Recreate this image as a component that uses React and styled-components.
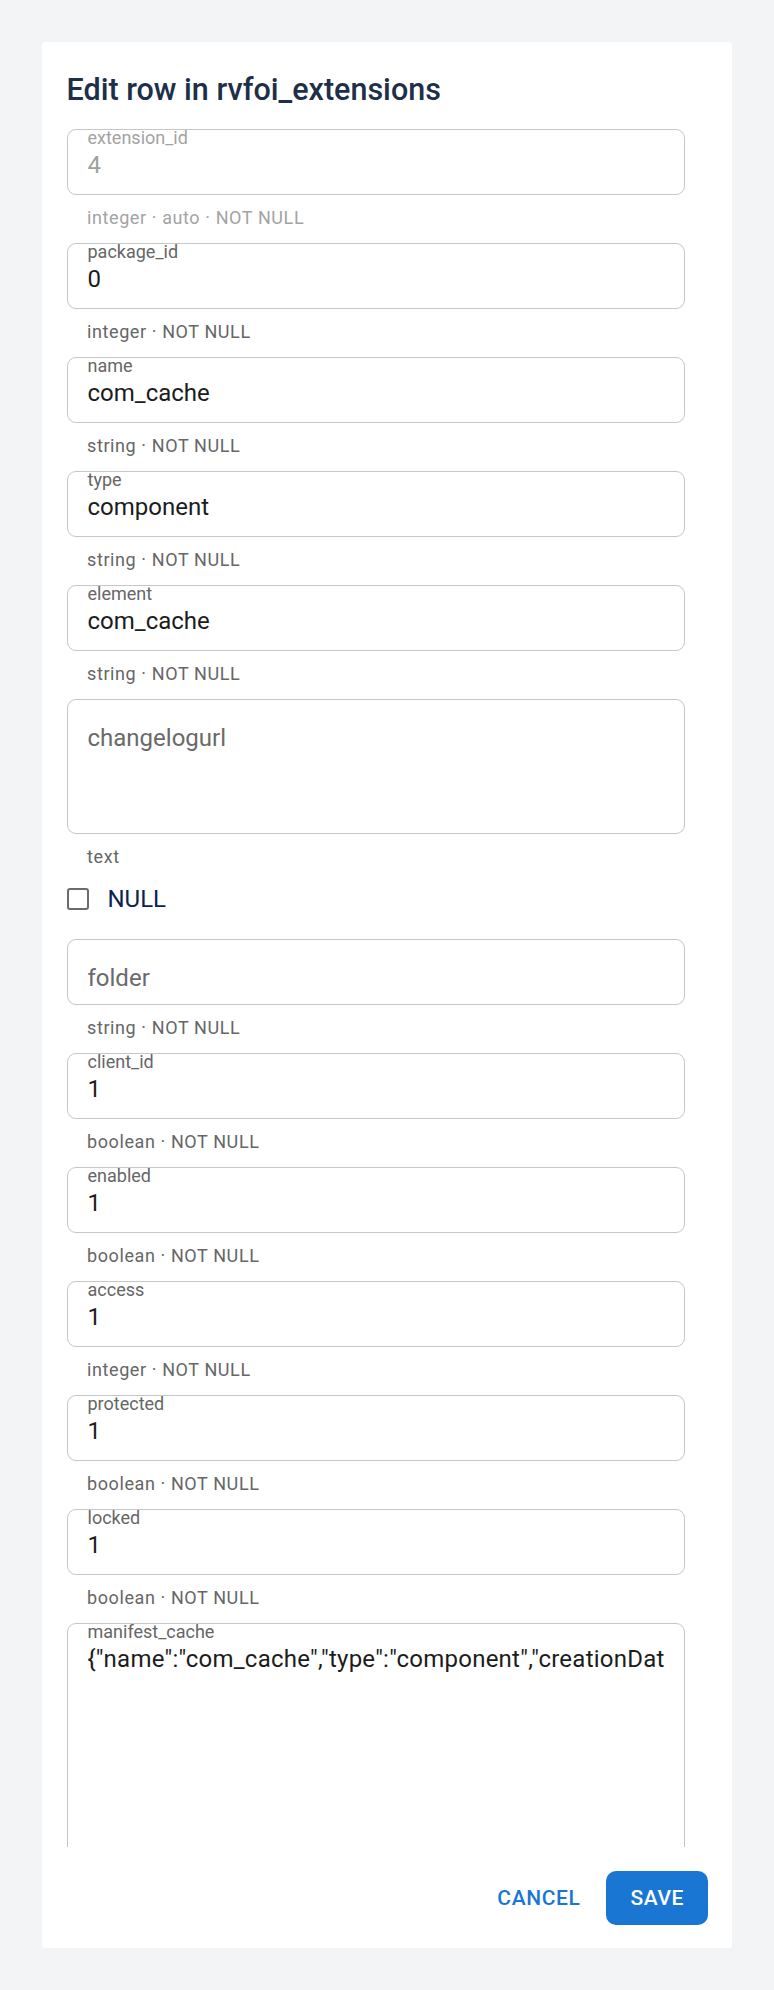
import React from "react"
import styled, { createGlobalStyle } from "styled-components"

const manifestValue =
    '{"name":"com_cache","type":"component","creationDate":"2006-04","author":"Joomla! Project","copyright":"(C) 2006 Open Source Matters, Inc.","version":"4.0.0"}'

const fields = [
    { name: "extension_id", value: "4", helper: "integer · auto · NOT NULL", disabled: true },
    { name: "package_id", value: "0", helper: "integer · NOT NULL" },
    { name: "name", value: "com_cache", helper: "string · NOT NULL" },
    { name: "type", value: "component", helper: "string · NOT NULL" },
    { name: "element", value: "com_cache", helper: "string · NOT NULL" },
    { name: "changelogurl", value: "", helper: "text", multiline: true, height: 135, nullable: true },
    { name: "folder", value: "", helper: "string · NOT NULL" },
    { name: "client_id", value: "1", helper: "boolean · NOT NULL" },
    { name: "enabled", value: "1", helper: "boolean · NOT NULL" },
    { name: "access", value: "1", helper: "integer · NOT NULL" },
    { name: "protected", value: "1", helper: "boolean · NOT NULL" },
    { name: "locked", value: "1", helper: "boolean · NOT NULL" },
    { name: "manifest_cache", value: manifestValue, helper: "text", multiline: true, height: 320 },
]

const Field = ({ name, value, helper, disabled, multiline, height, nullable }) => {     // filled fields show a small label on top, empty ones show it as a placeholder
    const filled = value !== ""
    return (
        <>
            <FieldWrap>
                <InputBox $height={multiline ? height : 66}>
                    {filled ? (
                        <>
                            <SmallLabel $disabled={disabled}>{name}</SmallLabel>
                            <Value $disabled={disabled} $multiline={multiline}>{value}</Value>
                        </>
                    ) : (
                        <Placeholder>{name}</Placeholder>
                    )}
                </InputBox>
                <Helper $disabled={disabled}>{helper}</Helper>
            </FieldWrap>
            {nullable && (
                <NullRow>
                    <CheckBox />
                    <NullLabel>NULL</NullLabel>
                </NullRow>
            )}
        </>
    )
}

const App = () => {
    return (
        <>
            <GlobalStyle />
            <Page>
                <Dialog>
                    <Title>Edit row in rvfoi_extensions</Title>
                    <Content>
                        {fields.map(f => <Field key={f.name} {...f} />)}
                    </Content>
                    <Actions>
                        <TextButton>Cancel</TextButton>
                        <SaveButton>Save</SaveButton>
                    </Actions>
                </Dialog>
            </Page>
        </>
    )
}

export default App


//-----------------------------------------------STYLES-----------------------------------------------//

const GlobalStyle = createGlobalStyle`
    body {
        margin: 0;
        background: #f3f4f6;
        font-family: Roboto, "Liberation Sans", sans-serif;
    }
`

const Page = styled.div`
    padding: 42px;
    height: 100vh;
    box-sizing: border-box;
`

const Dialog = styled.div`
    height: 100%;
    background: #ffffff;
    border-radius: 3px;
    display: flex;
    flex-direction: column;
    overflow: hidden;
`

const Title = styled.h2`
    margin: 0;
    padding: 24px 24px 0 24.5px;
    font-size: 30.5px;
    line-height: 48px;
    font-weight: 500;
    color: #1e2f4a;
`

const Content = styled.div`
    flex: 1;
    min-height: 0;
    overflow: hidden;
    padding: 15px 47px 0 24.5px;
`

const FieldWrap = styled.div`
    margin-bottom: 10px;
`

const InputBox = styled.div`
    height: ${props => props.$height}px;
    box-sizing: border-box;
    border: 1.5px solid #c6c6c6;
    border-radius: 9px;
    padding: 0 20px;
`

const SmallLabel = styled.div`
    margin-top: -1.5px;
    font-size: 18px;
    line-height: 18px;
    color: ${props => props.$disabled ? "#a3a3a3" : "#666666"};
`

const Value = styled.div`
    font-size: 24px;
    line-height: 36px;
    letter-spacing: ${props => props.$multiline ? "0.25px" : "0"};
    color: ${props => props.$disabled ? "#a0a0a0" : "#1c1c1c"};
    white-space: nowrap;
    overflow: hidden;
`

const Placeholder = styled.div`
    padding-top: 19.5px;
    font-size: 24px;
    line-height: 36px;
    color: #6a6a6a;
`

const Helper = styled.div`
    margin: 8px 0 0 20.5px;
    font-size: 18px;
    line-height: 30px;
    letter-spacing: 0.6px;
    color: ${props => props.$disabled ? "#a3a3a3" : "#666666"};
`

const NullRow = styled.label`
    height: 34px;
    margin-bottom: 23px;
    display: flex;
    align-items: center;
    gap: 19px;
`

const CheckBox = styled.span`
    width: 22px;
    height: 22px;
    box-sizing: border-box;
    border: 2.5px solid #6b6b6b;
    border-radius: 3px;
`

const NullLabel = styled.span`
    font-size: 24px;
    color: #0b2354;
`

const Actions = styled.div`
    display: flex;
    justify-content: flex-end;
    align-items: center;
    gap: 14px;
    padding: 24px 24px 23px;
`

const TextButton = styled.button`
    height: 54px;
    padding: 0 12px;
    border: none;
    background: none;
    font-family: inherit;
    font-size: 21px;
    font-weight: 500;
    letter-spacing: 0.6px;
    text-transform: uppercase;
    color: #1976d2;
`

const SaveButton = styled(TextButton)`
    padding: 0 24px;
    border-radius: 10px;
    background: #1976d2;
    color: #ffffff;
`
